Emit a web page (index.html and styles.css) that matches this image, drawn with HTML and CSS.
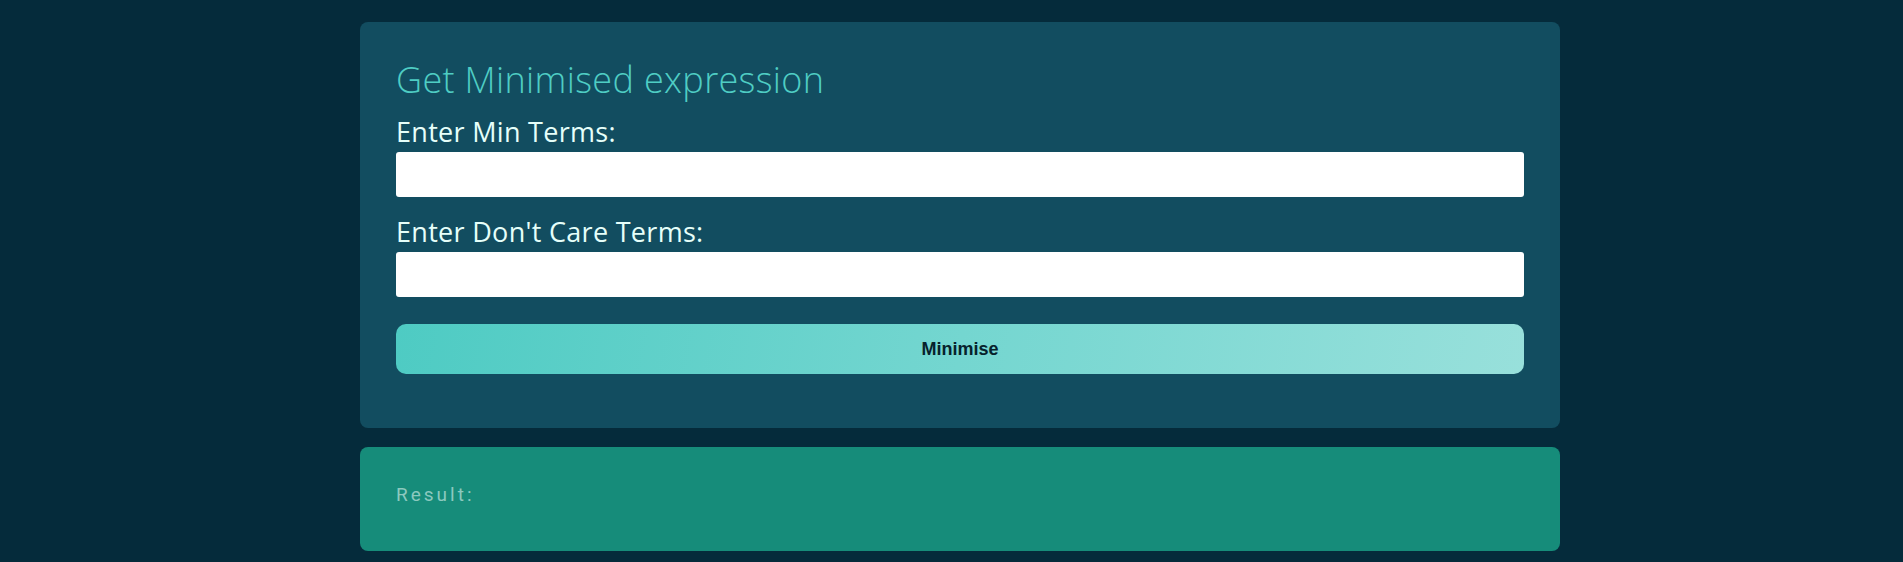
FILE: index.html
```html
<!DOCTYPE html>
<html lang="en">
<head>
<meta charset="utf-8">
<title>Get Minimised expression</title>
<link rel="stylesheet" href="styles.css">
</head>
<body>
<main class="page">
  <section class="card form-card">
    <h2 class="card-title">Get Minimised expression</h2>
    <label class="field-label" for="min">Enter Min Terms:</label>
    <input class="field-input" id="min" type="text">
    <label class="field-label field-label-second" for="dc">Enter Don't Care Terms:</label>
    <input class="field-input" id="dc" type="text">
    <button class="btn-minimise" type="button">Minimise</button>
  </section>
  <section class="card result-card">
    <p class="result-label">Result:</p>
  </section>
</main>
</body>
</html>
```

FILE: styles.css
```css
* { box-sizing: border-box; }

html, body {
  margin: 0;
  padding: 0;
  background: #052b3b;
  height: 100%;
}

body {
  font-family: "Open Sans", "Noto Sans", sans-serif;
  overflow: hidden;
}

.page {
  width: 1200px;
  margin-left: 360px;
  padding-top: 22px;
  display: flex;
  flex-direction: column;
  gap: 19px;
}

.card {
  border-radius: 8px;
  padding: 36px;
}

.form-card {
  background: #124d60;
  display: flex;
  flex-direction: column;
  padding-bottom: 54px;
}

.card-title {
  margin: 0;
  font-weight: 300;
  font-size: 36px;
  line-height: 43px;
  letter-spacing: 0.35px;
  color: #4fcdc4;
}

.field-label {
  display: block;
  margin-top: 15px;
  font-size: 27px;
  line-height: 32px;
  letter-spacing: 0.3px;
  color: #e6fffa;
  font-weight: 400;
}

.field-label-second {
  margin-top: 19px;
}

.field-input {
  margin-top: 4px;
  width: 100%;
  height: 45px;
  border: none;
  border-radius: 3px;
  background: #ffffff;
  padding: 0 10px;
  font-size: 18px;
}

.btn-minimise {
  margin-top: 27px;
  width: 100%;
  height: 50px;
  border: none;
  border-radius: 10px;
  background: linear-gradient(100deg, #4ecbc3 0%, #74d6d0 50%, #98e0db 100%);
  font-family: "Liberation Sans", Arial, sans-serif;
  font-weight: 700;
  font-size: 18px;
  color: #06222c;
}

.result-card {
  background: #168c7a;
  padding: 36px 36px 45px;
}

.result-label {
  margin: 0;
  font-family: Roboto, "Noto Sans", sans-serif;
  font-size: 19px;
  line-height: 23px;
  letter-spacing: 3px;
  color: #8cc9bf;
}
```
